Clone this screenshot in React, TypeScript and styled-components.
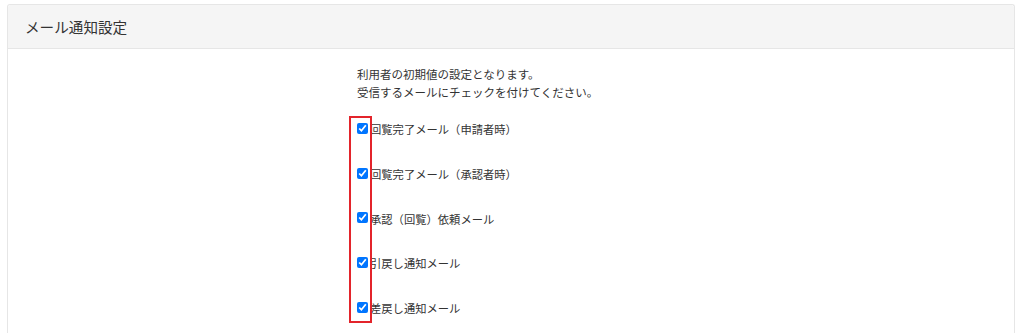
import React from "react";
import styled, { createGlobalStyle } from "styled-components";

const GlobalStyle = createGlobalStyle`
  html, body {
    margin: 0;
    padding: 0;
    background: #ffffff;
    overflow: hidden;
  }
  body {
    font-family: "Noto Sans CJK JP", "Noto Sans", sans-serif;
    color: #333333;
  }
`;

const Card = styled.section`
  margin: 4px 9px 0 7px;
  border: 1px solid #e6e6e6;
  border-bottom: none;
  border-radius: 3px 3px 0 0;
  background: #ffffff;
`;

const CardHeader = styled.header`
  height: 43px;
  display: flex;
  align-items: center;
  padding: 0 17px;
  background: #f5f5f5;
  border-bottom: 1px solid #e6e6e6;
  border-radius: 3px 3px 0 0;
`;

const Title = styled.h2`
  margin: 0;
  font-size: 14.6px;
  font-weight: 400;
  color: #333333;
`;

const CardBody = styled.div`
  box-sizing: border-box;
  padding: 16px 0 0 349px;
  height: 284px;
`;

const Intro = styled.p`
  margin: 0 0 6px;
  font-size: 11.5px;
  line-height: 18px;
  color: #333333;
`;

const List = styled.div`
  position: relative;
  display: flex;
  flex-direction: column;
`;

const Row = styled.label`
  height: 44.7px;
  display: flex;
  align-items: center;
  font-size: 11.3px;
  color: #333333;
`;

const Check = styled.input`
  width: 11px;
  height: 11px;
  margin: 0 2px 2px 0;
`;

const Highlight = styled.div`
  position: absolute;
  left: -8px;
  top: 9px;
  width: 19px;
  height: 203px;
  border: 2px solid #e3242b;
  pointer-events: none;
`;

const items = [
  "回覧完了メール（申請者時）",
  "回覧完了メール（承認者時）",
  "承認（回覧）依頼メール",
  "引戻し通知メール",
  "差戻し通知メール",
];

export default function App() {
  return (
    <>
      <GlobalStyle />
      <Card>
        <CardHeader>
          <Title>メール通知設定</Title>
        </CardHeader>
        <CardBody>
          <Intro>
            利用者の初期値の設定となります。
            <br />
            受信するメールにチェックを付けてください。
          </Intro>
          <List>
            {items.map((t) => (
              <Row key={t}>
                <Check type="checkbox" defaultChecked />
                {t}
              </Row>
            ))}
            <Highlight />
          </List>
        </CardBody>
      </Card>
    </>
  );
}
